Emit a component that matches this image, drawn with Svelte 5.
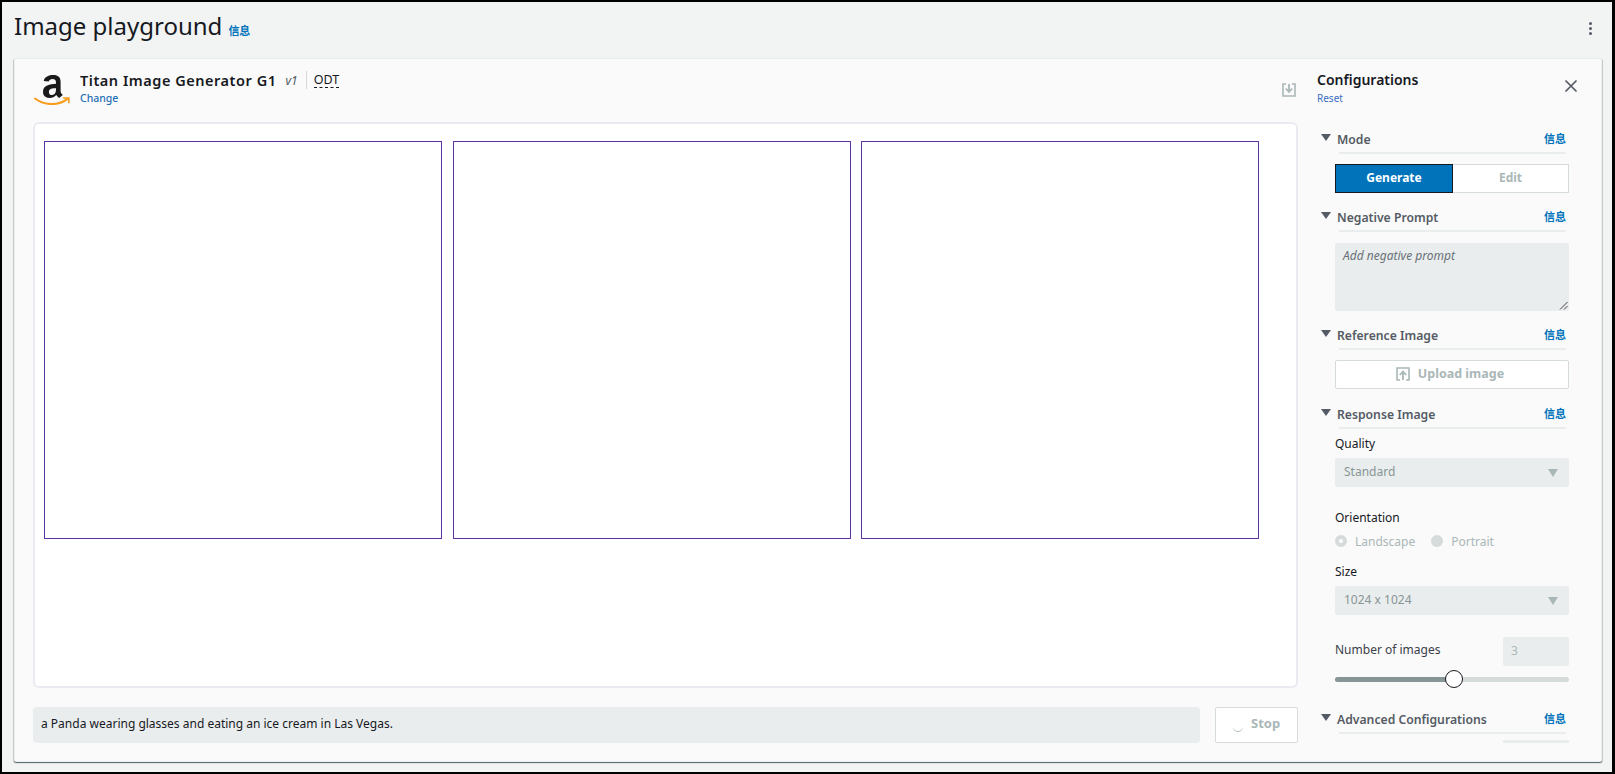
<script>
  const tiles = [1, 2, 3];
</script>

<div class="page">
  <header class="topbar">
    <h1>Image playground</h1>
    <a class="info title-info">信息</a>
    <div class="dots"><i></i><i></i><i></i></div>
  </header>

  <main class="card">
    <section class="left">
      <div class="model">
        <svg class="logo" viewBox="0 0 36 32" width="36" height="32">
          <path d="M19.500 2c-4.700 0-9 1.700-9.800 6l5 .5c.3-1.800 2-2.600 3.800-2.600 2.600 0 3.500 1.400 3.500 3.600v1.300c-6.200.4-13 1.600-13 8 0 4 2.600 6.200 6.300 6.200 3.200 0 5.100-1.100 7-3 .8 1.200 1.500 1.900 2.800 2.900l3.700-3c-1.300-1.300-2.200-2.100-2.200-4V8.800C26.600 4.100 24 2 19.500 2zm2.500 13.300v1.500c0 2.500-1.100 5.200-4.100 5.200-2 0-3-1.200-3-3.100 0-3.200 3.600-3.600 7.100-3.600z" fill="#1b1b1b"/>
          <path d="M1 25.500c5 3.800 11 5.600 16.600 5.600 5.500 0 11.500-1.800 15.500-5" fill="none" stroke="#f79c1d" stroke-width="2" stroke-linecap="round"/>
          <path d="M29.800 25h5v4.500" fill="none" stroke="#f79c1d" stroke-width="1.700" stroke-linecap="round"/>
        </svg>
        <div class="model-text">
          <div class="model-name">
            <strong>Titan Image Generator G1</strong>
            <em>v1</em>
            <span class="sep"></span>
            <span class="odt">ODT</span>
          </div>
          <a class="change">Change</a>
        </div>
        <svg class="save" viewBox="0 0 14 14" width="14" height="14">
          <path d="M4 1H1v12h12V1h-3" fill="none" stroke="#aab7b8" stroke-width="1.600"/>
          <path d="M7 1v7M3.800 5.500 7 9l3.200-3.500" fill="none" stroke="#aab7b8" stroke-width="1.800"/>
        </svg>
      </div>

      <div class="canvas">
        {#each tiles as t}
          <div class="tile"></div>
        {/each}
      </div>

      <div class="prompt-row">
        <div class="prompt">a Panda wearing glasses and eating an ice cream in Las Vegas.</div>
        <div class="stop">
          <span class="spinner"></span>
          <span class="stop-label">Stop</span>
        </div>
      </div>
    </section>

    <aside class="side">
      <div class="side-head">
        <div>
          <div class="side-title">Configurations</div>
          <a class="reset">Reset</a>
        </div>
        <svg class="close" viewBox="0 0 14 14" width="14" height="14">
          <path d="M1.500 1.500l11 11M12.500 1.500l-11 11" fill="none" stroke="#545b64" stroke-width="1.700"/>
        </svg>
      </div>

      <div class="sec-head"><span class="caret"></span><span class="sec-title">Mode</span><a class="info">信息</a></div>
      <div class="segments">
        <div class="seg on">Generate</div>
        <div class="seg">Edit</div>
      </div>

      <div class="sec-head neg"><span class="caret"></span><span class="sec-title">Negative Prompt</span><a class="info">信息</a></div>
      <div class="textarea">
        Add negative prompt
        <svg class="grip" viewBox="0 0 9 9" width="9" height="9">
          <path d="M1 8.500 8.500 1M5 8.500 8.500 5" stroke="#444" stroke-width="1" fill="none"/>
        </svg>
      </div>

      <div class="sec-head ref"><span class="caret"></span><span class="sec-title">Reference Image</span><a class="info">信息</a></div>
      <div class="upload">
        <svg viewBox="0 0 14 14" width="14" height="14">
          <path d="M4 13H1V1h12v12h-3" fill="none" stroke="#aab7b8" stroke-width="1.600"/>
          <path d="M7 13V5M3.800 8 7 4.500 10.200 8" fill="none" stroke="#aab7b8" stroke-width="1.800"/>
        </svg>
        <span>Upload image</span>
      </div>

      <div class="sec-head resp"><span class="caret"></span><span class="sec-title">Response Image</span><a class="info">信息</a></div>
      <div class="field-label quality">Quality</div>
      <div class="select first">Standard<span class="sel-caret"></span></div>

      <div class="field-label orient">Orientation</div>
      <div class="radios">
        <span class="radio checked"></span><span class="radio-text">Landscape</span>
        <span class="radio second"></span><span class="radio-text">Portrait</span>
      </div>

      <div class="field-label size">Size</div>
      <div class="select">1024 x 1024<span class="sel-caret"></span></div>

      <div class="num-row">
        <span class="num-label">Number of images</span>
        <div class="num">3</div>
      </div>
      <div class="slider">
        <div class="fill"></div>
        <div class="thumb"></div>
      </div>

      <div class="sec-head adv"><span class="caret"></span><span class="sec-title">Advanced Configurations</span><a class="info">信息</a></div>
      <div class="next-input"></div>
    </aside>
  </main>
</div>

<style>
  :global(body) {
    margin: 0;
    background: #000;
  }

  .page {
    box-sizing: border-box;
    height: 774px;
    border: solid #000;
    border-width: 2px 3px 2px 2px;
    background: #f2f3f3;
    font-family: "Noto Sans", "Noto Sans CJK SC", sans-serif;
    color: #16191f;
    overflow: hidden;
  }

  .topbar {
    height: 56px;
    display: flex;
    align-items: center;
    padding: 0 12px;
    position: relative;
  }

  h1 {
    margin: 0 0 8px;
    font-size: 24px;
    font-weight: 400;
    line-height: 48px;
  }

  .info {
    font-family: "Noto Sans CJK SC", sans-serif;
    font-size: 11px;
    font-weight: 700;
    color: #0073bb;
  }

  .title-info {
    margin: 0 0 0 6px;
  }

  .dots {
    margin-left: auto;
    margin-right: 8px;
    margin-bottom: 4px;
    display: flex;
    flex-direction: column;
    gap: 2px;
  }

  .dots i {
    width: 3px;
    height: 3px;
    border-radius: 50%;
    background: #545b64;
  }

  .card {
    box-sizing: border-box;
    width: 1588px;
    height: 704px;
    margin-left: 12px;
    display: flex;
    background: #fafafa;
    border-radius: 2px;
    border: 1px solid #eaeded;
    box-shadow: 0 1px 1px 0 rgba(0, 28, 36, 0.5), 1px 1px 1px 0 rgba(0, 28, 36, 0.15), -1px 1px 1px 0 rgba(0, 28, 36, 0.15);
  }

  .left {
    width: 1285px;
    flex: none;
    padding: 0 0 0 18px;
    box-sizing: border-box;
    display: flex;
    flex-direction: column;
  }

  .model {
    height: 63px;
    display: flex;
    align-items: flex-start;
    position: relative;
    padding-top: 11px;
    box-sizing: border-box;
  }

  .logo {
    margin: 3px 0 0 1px;
    flex: none;
  }

  .model-text {
    margin-left: 10px;
  }

  .model-name {
    display: flex;
    align-items: center;
    height: 20px;
    font-size: 14px;
  }

  .model-name strong {
    font-weight: 600;
    font-size: 14.500px;
    letter-spacing: 0.53px;
  }

  .model-name em {
    margin-left: 9px;
    font-size: 12px;
    color: #545b64;
  }

  .sep {
    width: 1px;
    height: 18px;
    background: #d5dbdb;
    margin: 0 7px 0 8px;
  }

  .odt {
    font-size: 12.500px;
    border-bottom: 1px dashed #16191f;
    line-height: 15px;
  }

  .change {
    display: block;
    font-size: 10.500px;
    font-weight: 500;
    color: #1f6fb5;
    line-height: 15px;
    margin-top: 1px;
  }

  .save {
    margin: 13px 4px 0 auto;
  }

  .canvas {
    box-sizing: border-box;
    height: 566px;
    width: 1265px;
    background: #fff;
    border: 2px solid #eaeaf2;
    border-radius: 6px;
    display: flex;
    align-items: flex-start;
    gap: 10.500px;
    padding: 17px 0 0 9px;
  }

  .tile {
    box-sizing: border-box;
    width: 398px;
    height: 398px;
    border: 1px solid #5a32a3;
  }

  .prompt-row {
    display: flex;
    margin-top: 19px;
    width: 1265px;
  }

  .prompt {
    box-sizing: border-box;
    width: 1168px;
    height: 36px;
    background: #eaeded;
    border-radius: 4px;
    padding: 0 8px;
    line-height: 34px;
    font-size: 12px;
    color: #16191f;
  }

  .stop {
    box-sizing: border-box;
    margin-left: 15px;
    width: 83px;
    height: 36px;
    border: 1px solid #d5dbdb;
    border-radius: 2px;
    background: #fff;
    display: flex;
    align-items: center;
    color: #aab7b8;
    font-weight: 700;
    font-size: 13px;
    padding-left: 17px;
    gap: 8px;
  }

  .stop-label {
    margin-bottom: 4px;
  }

  .spinner {
    width: 10px;
    height: 5px;
    margin-top: 7px;
    border-bottom: 1px solid #aab7b8;
    border-radius: 0 0 10px 10px;
  }

  .side {
    width: 301px;
    box-sizing: border-box;
    padding-left: 17px;
    height: 684px;
    overflow: hidden;
  }

  .side-head {
    display: flex;
    justify-content: space-between;
    height: 68px;
    padding-top: 11px;
    box-sizing: border-box;
    width: 261px;
  }

  .side-title {
    font-size: 14px;
    font-weight: 600;
    line-height: 20px;
  }

  .reset {
    display: block;
    font-size: 10px;
    color: #3a6fc4;
    line-height: 15px;
    margin-top: 1px;
  }

  .close {
    margin-top: 9px;
  }

  .sec-head {
    position: relative;
    margin-left: 22px;
    width: 227px;
    height: 25px;
    border-bottom: 2px solid #eaeded;
    box-sizing: content-box;
    display: flex;
    align-items: center;
    justify-content: space-between;
  }

  .sec-title {
    font-size: 12.200px;
    font-weight: 600;
    color: #545b64;
    margin-left: -2px;
  }

  .caret {
    position: absolute;
    left: -18px;
    top: 7px;
    border: solid transparent;
    border-width: 7px 5px 0;
    border-top-color: #545b64;
  }

  .sec-head .info {
    margin-top: -4px;
  }

  .segments {
    display: flex;
    margin: 10px 0 0 18px;
    width: 234px;
    height: 29px;
  }

  .seg {
    box-sizing: border-box;
    flex: 1;
    border: 1px solid #d5dbdb;
    border-left: 0;
    background: #fff;
    color: #aab7b8;
    font-size: 12px;
    font-weight: 700;
    display: flex;
    align-items: center;
    justify-content: center;
    padding-bottom: 2px;
  }

  .seg.on {
    flex: none;
    width: 118px;
    border: 1px solid #16191f;
    background: #0073bb;
    color: #fff;
  }

  .neg {
    margin-top: 12px;
  }

  .textarea {
    position: relative;
    box-sizing: border-box;
    margin: 11px 0 0 18px;
    width: 234px;
    height: 68px;
    padding: 4px 8px;
    background: #eaeded;
    border-radius: 2px;
    font-size: 12px;
    font-style: italic;
    color: #687078;
  }

  .grip {
    position: absolute;
    right: 1px;
    bottom: 1px;
  }

  .ref {
    margin-top: 12px;
  }

  .upload {
    box-sizing: border-box;
    margin: 10px 0 0 18px;
    width: 234px;
    height: 29px;
    background: #fff;
    border: 1px solid #d5dbdb;
    border-radius: 2px;
    display: flex;
    align-items: center;
    justify-content: center;
    gap: 8px;
    color: #aab7b8;
    font-size: 12.500px;
    font-weight: 700;
    padding: 0 4px 2px 0;
  }

  .resp {
    margin-top: 13px;
  }

  .field-label {
    margin-left: 18px;
    font-size: 12px;
    line-height: 18px;
    color: #16191f;
  }

  .quality {
    margin-top: 6px;
  }

  .select {
    position: relative;
    box-sizing: border-box;
    margin: 5px 0 0 18px;
    width: 234px;
    height: 29px;
    line-height: 27px;
    padding-left: 9px;
    background: #eaeded;
    border-radius: 2px;
    font-size: 12px;
    color: #879596;
  }

  .sel-caret {
    position: absolute;
    right: 11px;
    top: 11px;
    border: solid transparent;
    border-width: 8px 5px 0;
    border-top-color: #aab7b8;
  }

  .orient {
    margin-top: 22px;
  }

  .radios {
    display: flex;
    align-items: center;
    margin: 5px 0 0 18px;
    height: 18px;
    font-size: 12px;
    color: #aab7b8;
  }

  .radio {
    box-sizing: border-box;
    width: 12px;
    height: 12px;
    border-radius: 50%;
    background: #d5dbdb;
    margin-right: 8px;
  }

  .radio.checked {
    border: 4px solid #d5dbdb;
    background: #fff;
  }

  .radio.second {
    margin-left: 16px;
  }

  .size {
    margin-top: 13px;
  }

  .num-row {
    margin: 22px 0 0 18px;
    width: 234px;
    height: 29px;
    display: flex;
    align-items: center;
    justify-content: space-between;
    font-size: 12px;
    color: #3b4149;
  }

  .num-label {
    margin-bottom: 4px;
  }

  .num {
    box-sizing: border-box;
    width: 66px;
    height: 29px;
    background: #eaeded;
    border-radius: 2px;
    padding-left: 8px;
    line-height: 28px;
    color: #aab7b8;
  }

  .slider {
    position: relative;
    margin: 11px 0 0 18px;
    width: 234px;
    height: 5px;
    background: #d5dbdb;
    border-radius: 3px;
  }

  .fill {
    width: 119px;
    height: 100%;
    background: #879596;
    border-radius: 3px 0 0 3px;
  }

  .thumb {
    position: absolute;
    box-sizing: border-box;
    left: 110px;
    top: -7px;
    width: 18px;
    height: 18px;
    border-radius: 50%;
    border: 1px solid #16191f;
    background: #fff;
  }

  .adv {
    margin-top: 25px;
  }

  .next-input {
    margin: 6px 0 0 186px;
    width: 66px;
    height: 29px;
    background: #eaeded;
  }
</style>
